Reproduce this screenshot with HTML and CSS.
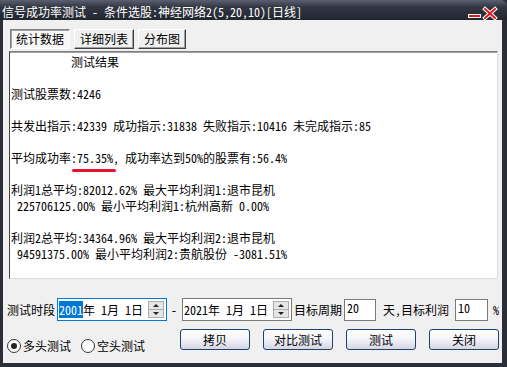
FILE: index.html
```html
<!DOCTYPE html>
<html lang="zh-CN">
<head>
  <meta charset="UTF-8">
  <title>信号成功率测试</title>
  <link rel="stylesheet" href="styles.css">
</head>
<body>
  <div class="window">
    <div class="titlebar">
      <span class="title">信号成功率测试 - 条件选股:神经网络2(5,20,10)[日线]</span>
      <svg class="caption-btns" width="32" height="20" viewBox="0 0 32 20">
        <rect x="2.5" y="14.5" width="12" height="3" fill="#e01818" stroke="#ffffff" stroke-width="1"/>
        <path d="M19 9 L29 18 M29 9 L19 18" stroke="#ffffff" stroke-width="4" stroke-linecap="square"/>
        <path d="M19 9 L29 18 M29 9 L19 18" stroke="#e01818" stroke-width="2" stroke-linecap="square"/>
      </svg>
    </div>

    <div class="client">
      <div class="tabs">
        <div class="tab tab-active">统计数据</div>
        <div class="tab">详细列表</div>
        <div class="tab">分布图</div>
      </div>

      <div class="report">
<div class="lines">          测试结果

测试股票数:4246

共发出指示:42339 成功指示:31838 失败指示:10416 未完成指示:85

平均成功率:75.35%, 成功率达到50%的股票有:56.4%

利润1总平均:82012.62% 最大平均利润1:退市昆机
 225706125.00% 最小平均利润1:杭州高新 0.00%

利润2总平均:34364.96% 最大平均利润2:退市昆机
 94591375.00% 最小平均利润2:贵航股份 -3081.51%</div>
        <span class="marker"></span>
      </div>

      <div class="date-row">
        <span class="label">测试时段</span>
        <div class="picker picker-focus">
          <span class="picker-text"><span class="sel">2001</span>年 1月 1日</span>
          <div class="spin"><span class="spin-up"></span><span class="spin-down"></span></div>
        </div>
        <span class="dash">-</span>
        <div class="picker">
          <span class="picker-text">2021年 1月 1日</span>
          <div class="spin"><span class="spin-up"></span><span class="spin-down"></span></div>
        </div>
        <span class="label label-period">目标周期</span>
        <div class="field field-period">20</div>
        <span class="label label-profit">天,目标利润</span>
        <div class="field field-profit">10</div>
        <span class="pct">%</span>
      </div>

      <div class="action-row">
        <label class="radio"><span class="dot dot-on"></span>多头测试</label>
        <label class="radio radio-short"><span class="dot"></span>空头测试</label>
        <button class="btn btn-copy">拷贝</button>
        <button class="btn">对比测试</button>
        <button class="btn">测试</button>
        <button class="btn">关闭</button>
      </div>
    </div>
  </div>
</body>
</html>
```

FILE: styles.css
```css
body {
  margin: 0;
  padding: 0;
  font-family: "Noto Sans Mono CJK SC", "Noto Sans CJK SC", monospace;
  font-size: 12px;
  color: #000;
}

.window {
  width: 507px;
  height: 367px;
  display: flex;
  flex-direction: column;
  background: #2a2e37;
}

.titlebar {
  height: 20px;
  flex: none;
  display: flex;
  align-items: flex-start;
  justify-content: space-between;
  background: linear-gradient(to bottom, #5a6070 0, #323743 35%, #22262e 100%);
  border-radius: 0 6px 0 0;
}

.title {
  color: #fff;
  line-height: 14px;
  padding: 5px 0 0 2px;
  white-space: pre;
}

.caption-btns {
  margin-right: 9px;
}

.client {
  flex: 1;
  margin: 0 5px 4px 3px;
  background: #f0f0f0;
  display: flex;
  flex-direction: column;
}

/* tabs */
.tabs {
  display: flex;
  gap: 4px;
  margin: 9px 0 0 7px;
  height: 20px;
}

.tab {
  box-sizing: border-box;
  height: 20px;
  padding: 0 5px;
  line-height: 18px;
  border: 1px solid;
  border-color: #fff #404040 #404040 #fff;
  box-shadow: inset -1px -1px #a0a0a0;
  background: #f0f0f0;
}

.tab-active {
  border-color: #808080 #fff #fff #808080;
  box-shadow: inset 1px 1px #a0a0a0;
  background: #f8f8f8;
}

/* report box */
.report {
  position: relative;
  box-sizing: border-box;
  height: 228px;
  margin: 2px 4px 0 6px;
  background: #fff;
  border: 1px solid;
  border-color: #808080 #dcdcdc #dcdcdc #404040;
  box-shadow: inset 0 1px #a0a0a0;
}

.lines {
  white-space: pre;
  line-height: 16px;
  padding: 2px 0 0 1px;
}

.marker {
  position: absolute;
  left: 62px;
  top: 117px;
  width: 44px;
  height: 3px;
  border-radius: 2px;
  background: #e8132e;
}

/* date row */
.date-row {
  display: flex;
  align-items: center;
  height: 23px;
  margin-top: 19px;
  white-space: pre;
}

.label {
  margin-left: 4px;
}

.picker {
  box-sizing: border-box;
  width: 110px;
  height: 23px;
  margin-left: 2px;
  display: flex;
  align-items: center;
  justify-content: space-between;
  background: #fff;
  border: 1px solid #7a7a7a;
  padding: 0 2px 0 1px;
}

.picker-focus {
  border-color: #0078d7;
}

.sel {
  background: #0078d7;
  color: #fff;
}

.spin {
  box-sizing: border-box;
  width: 16px;
  height: 17px;
  display: flex;
  flex-direction: column;
  border: 1px solid #adadad;
  background: #e6e6e6;
}

.spin-up,
.spin-down {
  flex: 1;
  position: relative;
}

.spin-up {
  border-bottom: 1px solid #adadad;
}

.spin-up::after,
.spin-down::after {
  content: "";
  position: absolute;
  left: 4px;
  top: 2px;
  border-left: 3px solid transparent;
  border-right: 3px solid transparent;
}

.spin-up::after {
  border-bottom: 3px solid #222;
}

.spin-down::after {
  border-top: 3px solid #222;
}

.dash {
  margin: 0 3px 0 4px;
}

.label-period {
  margin-left: 2px;
}

.field {
  box-sizing: border-box;
  height: 22px;
  background: #fff;
  border: 1px solid #7a7a7a;
  padding: 1px 0 0 2px;
  line-height: 14px;
}

.field-period {
  width: 32px;
  margin-left: 2px;
}

.label-profit {
  margin-left: 7px;
}

.field-profit {
  width: 33px;
  margin-left: 6px;
}

.pct {
  margin-left: 5px;
}

/* radios and buttons */
.action-row {
  display: flex;
  align-items: flex-start;
  margin-top: 8px;
  white-space: nowrap;
}

.radio {
  display: flex;
  align-items: center;
  gap: 2px;
  margin: 9px 0 0 4px;
  line-height: 16px;
}

.radio-short {
  margin-left: 10px;
}

.dot {
  box-sizing: border-box;
  width: 14px;
  height: 14px;
  border-radius: 50%;
  border: 1px solid #333;
  background: #fff;
  position: relative;
}

.dot-on::after {
  content: "";
  position: absolute;
  left: 3px;
  top: 3px;
  width: 6px;
  height: 6px;
  border-radius: 50%;
  background: #222;
}

.btn {
  width: 70px;
  height: 21px;
  margin-left: 13px;
  padding: 0;
  font: inherit;
  color: #000;
  border: 1px solid #1d426c;
  border-radius: 3px;
  background: linear-gradient(to bottom, #ffffff 0, #f4f4fa 45%, #d6d6e4 100%);
}

.btn-copy {
  margin-left: 35px;
}
```
